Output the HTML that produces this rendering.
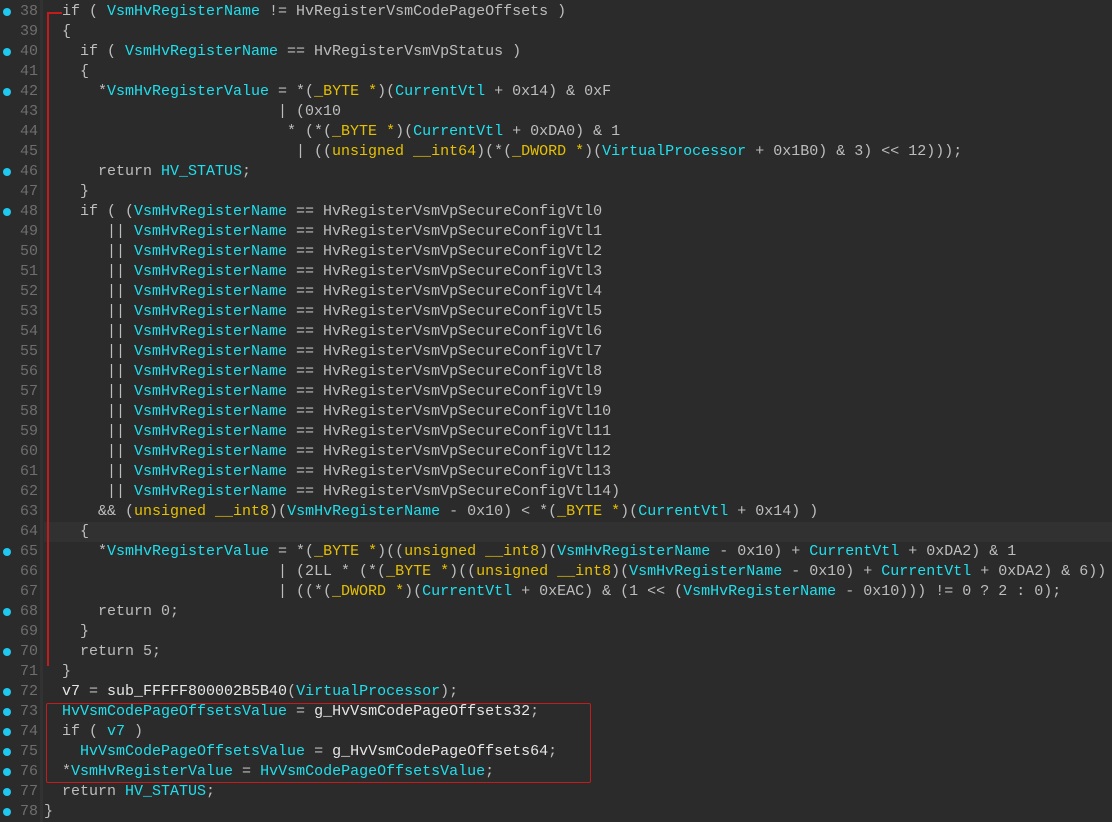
<!DOCTYPE html>
<html><head><meta charset="utf-8"><style>
body{margin:0;width:1112px;height:822px;background:#2b2b2b;overflow:hidden;position:relative;font-family:"Liberation Mono","DejaVu Sans Mono",monospace;font-size:15px;}
.gut{position:absolute;left:0;top:0;width:40px;height:822px;background:#2b2b2b}
.sep{position:absolute;left:40px;top:0;width:3px;height:822px;background:#323232}
.ln{position:absolute;left:0;width:38px;text-align:right;color:#6e6e6e;line-height:20px;height:20px}
.dot{position:absolute;left:3px;width:8px;height:8px;border-radius:50%;background:#1ec8f0}
.l{position:absolute;left:62px;line-height:20px;height:20px;white-space:pre;color:#bdbdbd}
.c{color:#1ee0ee}.y{color:#e6c000}.w{color:#e6e6e6}
.hl{position:absolute;left:44px;width:1068px;height:20px;background:#313131}
</style></head><body>
<div class="gut"></div><div class="sep"></div>
<div class="hl" style="top:522px"></div>
<div style="position:absolute;left:47px;top:12px;width:2px;height:654px;background:#c41c1c"></div>
<div style="position:absolute;left:47px;top:12px;width:15px;height:2px;background:#c41c1c"></div>
<div style="position:absolute;left:46px;top:703px;width:543px;height:78px;border:1.5px solid #c41c1c;border-radius:2px"></div>
<div id="g"></div>
<div id="code">
<div class="l" style="top:2px">if ( <span class="c">VsmHvRegisterName</span> != HvRegisterVsmCodePageOffsets )</div>
<div class="l" style="top:22px">{</div>
<div class="l" style="top:42px">  if ( <span class="c">VsmHvRegisterName</span> == HvRegisterVsmVpStatus )</div>
<div class="l" style="top:62px">  {</div>
<div class="l" style="top:82px">    *<span class="c">VsmHvRegisterValue</span> = *(<span class="y">_BYTE</span> <span class="y">*</span>)(<span class="c">CurrentVtl</span> + 0x14) &amp; 0xF</div>
<div class="l" style="top:102px">                        | (0x10</div>
<div class="l" style="top:122px">                         * (*(<span class="y">_BYTE</span> <span class="y">*</span>)(<span class="c">CurrentVtl</span> + 0xDA0) &amp; 1</div>
<div class="l" style="top:142px">                          | ((<span class="y">unsigned __int64</span>)(*(<span class="y">_DWORD</span> <span class="y">*</span>)(<span class="c">VirtualProcessor</span> + 0x1B0) &amp; 3) &lt;&lt; 12)));</div>
<div class="l" style="top:162px">    return <span class="c">HV_STATUS</span>;</div>
<div class="l" style="top:182px">  }</div>
<div class="l" style="top:202px">  if ( (<span class="c">VsmHvRegisterName</span> == HvRegisterVsmVpSecureConfigVtl0</div>
<div class="l" style="top:222px">     || <span class="c">VsmHvRegisterName</span> == HvRegisterVsmVpSecureConfigVtl1</div>
<div class="l" style="top:242px">     || <span class="c">VsmHvRegisterName</span> == HvRegisterVsmVpSecureConfigVtl2</div>
<div class="l" style="top:262px">     || <span class="c">VsmHvRegisterName</span> == HvRegisterVsmVpSecureConfigVtl3</div>
<div class="l" style="top:282px">     || <span class="c">VsmHvRegisterName</span> == HvRegisterVsmVpSecureConfigVtl4</div>
<div class="l" style="top:302px">     || <span class="c">VsmHvRegisterName</span> == HvRegisterVsmVpSecureConfigVtl5</div>
<div class="l" style="top:322px">     || <span class="c">VsmHvRegisterName</span> == HvRegisterVsmVpSecureConfigVtl6</div>
<div class="l" style="top:342px">     || <span class="c">VsmHvRegisterName</span> == HvRegisterVsmVpSecureConfigVtl7</div>
<div class="l" style="top:362px">     || <span class="c">VsmHvRegisterName</span> == HvRegisterVsmVpSecureConfigVtl8</div>
<div class="l" style="top:382px">     || <span class="c">VsmHvRegisterName</span> == HvRegisterVsmVpSecureConfigVtl9</div>
<div class="l" style="top:402px">     || <span class="c">VsmHvRegisterName</span> == HvRegisterVsmVpSecureConfigVtl10</div>
<div class="l" style="top:422px">     || <span class="c">VsmHvRegisterName</span> == HvRegisterVsmVpSecureConfigVtl11</div>
<div class="l" style="top:442px">     || <span class="c">VsmHvRegisterName</span> == HvRegisterVsmVpSecureConfigVtl12</div>
<div class="l" style="top:462px">     || <span class="c">VsmHvRegisterName</span> == HvRegisterVsmVpSecureConfigVtl13</div>
<div class="l" style="top:482px">     || <span class="c">VsmHvRegisterName</span> == HvRegisterVsmVpSecureConfigVtl14)</div>
<div class="l" style="top:502px">    &amp;&amp; (<span class="y">unsigned __int8</span>)(<span class="c">VsmHvRegisterName</span> - 0x10) &lt; *(<span class="y">_BYTE</span> <span class="y">*</span>)(<span class="c">CurrentVtl</span> + 0x14) )</div>
<div class="l" style="top:522px">  {</div>
<div class="l" style="top:542px">    *<span class="c">VsmHvRegisterValue</span> = *(<span class="y">_BYTE</span> <span class="y">*</span>)((<span class="y">unsigned __int8</span>)(<span class="c">VsmHvRegisterName</span> - 0x10) + <span class="c">CurrentVtl</span> + 0xDA2) &amp; 1</div>
<div class="l" style="top:562px">                        | (2LL * (*(<span class="y">_BYTE</span> <span class="y">*</span>)((<span class="y">unsigned __int8</span>)(<span class="c">VsmHvRegisterName</span> - 0x10) + <span class="c">CurrentVtl</span> + 0xDA2) &amp; 6))</div>
<div class="l" style="top:582px">                        | ((*(<span class="y">_DWORD</span> <span class="y">*</span>)(<span class="c">CurrentVtl</span> + 0xEAC) &amp; (1 &lt;&lt; (<span class="c">VsmHvRegisterName</span> - 0x10))) != 0 ? 2 : 0);</div>
<div class="l" style="top:602px">    return 0;</div>
<div class="l" style="top:622px">  }</div>
<div class="l" style="top:642px">  return 5;</div>
<div class="l" style="top:662px">}</div>
<div class="l" style="top:682px"><span class="w">v7</span> = <span class="w">sub_FFFFF800002B5B40</span>(<span class="c">VirtualProcessor</span>);</div>
<div class="l" style="top:702px"><span class="c">HvVsmCodePageOffsetsValue</span> = <span class="w">g_HvVsmCodePageOffsets32</span>;</div>
<div class="l" style="top:722px">if ( <span class="c">v7</span> )</div>
<div class="l" style="top:742px">  <span class="c">HvVsmCodePageOffsetsValue</span> = <span class="w">g_HvVsmCodePageOffsets64</span>;</div>
<div class="l" style="top:762px">*<span class="c">VsmHvRegisterValue</span> = <span class="c">HvVsmCodePageOffsetsValue</span>;</div>
<div class="l" style="top:782px">return <span class="c">HV_STATUS</span>;</div>
<div class="l" style="top:802px;left:44px">}</div>
</div>
<div class="ln" style="top:2px">38</div><div class="ln" style="top:22px">39</div><div class="ln" style="top:42px">40</div><div class="ln" style="top:62px">41</div><div class="ln" style="top:82px">42</div><div class="ln" style="top:102px">43</div><div class="ln" style="top:122px">44</div><div class="ln" style="top:142px">45</div><div class="ln" style="top:162px">46</div><div class="ln" style="top:182px">47</div><div class="ln" style="top:202px">48</div><div class="ln" style="top:222px">49</div><div class="ln" style="top:242px">50</div><div class="ln" style="top:262px">51</div><div class="ln" style="top:282px">52</div><div class="ln" style="top:302px">53</div><div class="ln" style="top:322px">54</div><div class="ln" style="top:342px">55</div><div class="ln" style="top:362px">56</div><div class="ln" style="top:382px">57</div><div class="ln" style="top:402px">58</div><div class="ln" style="top:422px">59</div><div class="ln" style="top:442px">60</div><div class="ln" style="top:462px">61</div><div class="ln" style="top:482px">62</div><div class="ln" style="top:502px">63</div><div class="ln" style="top:522px">64</div><div class="ln" style="top:542px">65</div><div class="ln" style="top:562px">66</div><div class="ln" style="top:582px">67</div><div class="ln" style="top:602px">68</div><div class="ln" style="top:622px">69</div><div class="ln" style="top:642px">70</div><div class="ln" style="top:662px">71</div><div class="ln" style="top:682px">72</div><div class="ln" style="top:702px">73</div><div class="ln" style="top:722px">74</div><div class="ln" style="top:742px">75</div><div class="ln" style="top:762px">76</div><div class="ln" style="top:782px">77</div><div class="ln" style="top:802px">78</div>
<div class="dot" style="top:8px"></div><div class="dot" style="top:48px"></div><div class="dot" style="top:88px"></div><div class="dot" style="top:168px"></div><div class="dot" style="top:208px"></div><div class="dot" style="top:548px"></div><div class="dot" style="top:608px"></div><div class="dot" style="top:648px"></div><div class="dot" style="top:688px"></div><div class="dot" style="top:708px"></div><div class="dot" style="top:728px"></div><div class="dot" style="top:748px"></div><div class="dot" style="top:768px"></div><div class="dot" style="top:788px"></div><div class="dot" style="top:808px"></div>
</body></html>
